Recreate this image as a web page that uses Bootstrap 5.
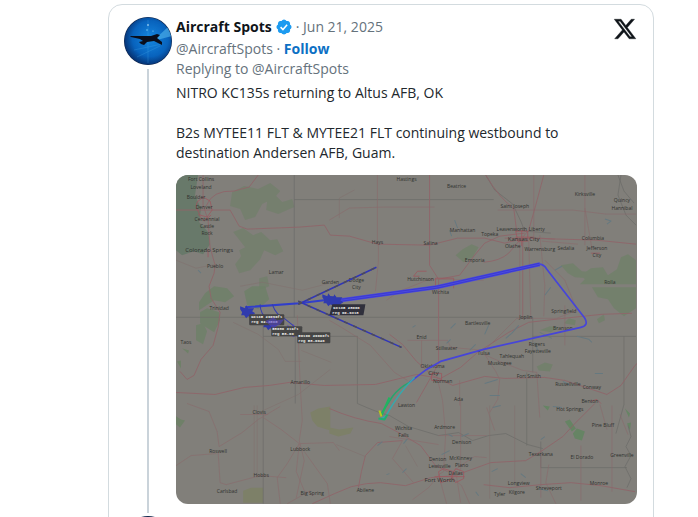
<!DOCTYPE html>
<html lang="en">
<head>
<meta charset="utf-8">
<meta name="viewport" content="width=device-width, initial-scale=1">
<title>Aircraft Spots on X</title>
<link href="https://cdn.jsdelivr.net/npm/bootstrap@5.3.0/dist/css/bootstrap.min.css" rel="stylesheet">
<style>
body{font-family:"Open Sans","Noto Sans",sans-serif;font-size:14px;line-height:20px;color:#22282d;background:#fff}
.page-wrap{padding:4px 44px 0 108px}
.post-card{border:1px solid #d3dbdf;border-radius:14px;padding:12px 16px 16px 15px}
.post-side{width:48px}
.avatar{width:48px;height:48px}
.thread{width:2px;background:#cad3da;margin:4px 0 3px}
.post-body{padding:0 0 12px 4px}
.name-row{margin-bottom:2px}
.muted{color:#65727c}
.author{color:#0f1419;font-weight:700}
.follow{color:#0c70c4;font-weight:700}
.post-text{margin:4px 0 12px;white-space:pre-line}
.map{border-radius:12px;background:#817f7a}
.x-logo{width:24px;height:24px}
</style>
<script src="https://cdn.jsdelivr.net/npm/bootstrap@5.3.0/dist/js/bootstrap.bundle.min.js"></script>
</head>
<body>
<main class="page-wrap vh-100 overflow-hidden">
<div class="post-card">
<article class="d-flex">
<div class="post-side d-flex flex-column align-items-center flex-shrink-0">
<svg class="avatar flex-shrink-0" viewBox="0 0 48 48" role="img" aria-label="Aircraft Spots avatar">
<defs><radialGradient id="sky" cx=".55" cy=".45" r=".62"><stop offset="0" stop-color="#1688e0"/><stop offset=".6" stop-color="#0863bd"/><stop offset="1" stop-color="#062158"/></radialGradient>
<clipPath id="disc"><circle cx="24" cy="24" r="23.5"/></clipPath></defs>
<circle cx="24" cy="24" r="24" fill="#10264c"/><g clip-path="url(#disc)"><rect width="48" height="48" fill="url(#sky)"/><path d="M29 24 45 9 48 19Z" fill="#4fb0e9" opacity=".65"/>
<path d="M10 33 38 27M13 40 36 29M24 3V46" stroke="#4aaceb" stroke-width=".5" opacity=".5"/><circle cx="24" cy="8" r=".8" fill="#d7f4ff"/><circle cx="23" cy="13" r=".7" fill="#8bdcff"/><circle cx="29" cy="14" r=".6" fill="#8bdcff"/></g>
<path id="jet" d="M6 19 27 19 33 17 36 18 33 21 38 25 38 28 30 24 23 25 20 28 17 27 15 25 19 24 16 22 7 20Z" fill="#090e1c"/></svg>
<div class="thread flex-grow-1"></div>
</div>
<div class="post-body flex-grow-1">
<header class="d-flex justify-content-between">
<div>
<div class="name-row d-flex align-items-center gap-1">
<span class="author">Aircraft Spots</span>
<svg width="16" height="16" viewBox="1 1 20 20" role="img" aria-label="Verified"><path fill="#1d9bf0" d="M20.396 11c-.018-.646-.215-1.275-.57-1.816-.354-.540-.852-.972-1.438-1.246.223-.607.270-1.264.140-1.897-.131-.634-.437-1.218-.882-1.687-.470-.445-1.053-.750-1.687-.882-.633-.130-1.290-.083-1.897.140-.273-.587-.704-1.086-1.245-1.440S11.647 1.620 11 1.604c-.646.017-1.273.213-1.813.568s-.969.854-1.240 1.440c-.608-.223-1.267-.272-1.902-.140-.635.130-1.220.436-1.690.882-.445.470-.749 1.055-.878 1.688-.130.633-.080 1.290.144 1.896-.587.274-1.087.705-1.443 1.245-.356.540-.555 1.170-.574 1.817.020.647.218 1.276.574 1.817.356.540.856.972 1.443 1.245-.224.606-.274 1.263-.144 1.896.130.634.433 1.218.877 1.688.470.443 1.054.747 1.687.878.633.132 1.290.084 1.897-.136.274.586.705 1.084 1.246 1.439.540.354 1.170.551 1.816.569.647-.016 1.276-.213 1.817-.567s.972-.854 1.245-1.440c.604.239 1.266.296 1.903.164.636-.132 1.220-.447 1.680-.907.460-.460.776-1.044.908-1.681s.075-1.299-.165-1.903c.586-.274 1.084-.705 1.439-1.246.354-.540.551-1.170.569-1.816z"/><path fill="none" stroke="#fff" stroke-width="1.900" d="m6.700 11.200 3 3 5.200-6"/></svg>
<span class="muted">· Jun 21, 2025</span>
</div>
<div class="muted">@AircraftSpots · <a class="follow text-decoration-none" href="#">Follow</a></div>
<div class="muted">Replying to @AircraftSpots</div>
</div>
<a href="#" aria-label="View on X"><svg class="x-logo d-block" viewBox="0 0 24 24"><path fill="#0f1419" stroke="#0f1419" stroke-width=".4" d="M18.244 2.250h3.308l-7.227 8.260 8.502 11.240H16.170l-5.214-6.817L4.990 21.750H1.680l7.730-8.835L1.254 2.250H8.080l4.713 6.231zm-1.161 17.520h1.833L7.084 4.126H5.117z"/></svg></a>
</header>
<p class="post-text pe-5">NITRO KC135s returning to Altus AFB, OK

B2s MYTEE11 FLT &amp; MYTEE21 FLT continuing westbound to destination Andersen AFB, Guam.</p>
<svg class="map d-block w-100" viewBox="177 175 460 328" role="img" aria-label="Flight tracks across the central United States" fill="none" stroke-linejoin="round">
<g fill="#6f8068">
<path d="M177 175h22l-3 20 6 14-2 13 9 10 2 12-7 10-9-3-12 4-6-5z" fill="#68796a"/>
<path d="M233 192l12-6 14 3 12-6 10 8-6 7-12 6-7 13-10 3-5-11-10-3zM268 201l8-6 7 7 10-3 2 8-16 7-12-4zM234 232l10-4 10 7 8-3 9 8 7-1 6 12-8 4-11-5-4 9-10 11-11 3-4-9 6-8-2-6 6-3zM260 278l8-2 2 10-10 4z" opacity=".65"/>
<path d="M206 293l9-7 13 2 7 8-9 6-11-2-9 6-6 4v-8zM201 312l7-4 12 4 1 8-6 12-8-5-6-4zM197 325l7-2 4 8-4 13-7-4zM245 291l8-5h13l4 13-11 10-11-4z" opacity=".85"/>
<path d="M456 255l7-6 9-5 7 3-6 10-9 5zM561 265l12-2 9 8 12 1-5 6-14-1-7-4zM581 275l10-7 12-1 5 8 9-6 4-12 7-3 8 6v24h-56l5-5zM592 287h44v21l-12 8-10-8-6-9-10-2zM597 319l7-5 1 6-6 3zM564 323l5-5 7 2-1 5zM540 330l10-4 9 1-8 5zM537 366l8-4 8 2-3 7-11-1z" opacity=".75"/>
<path d="M565 421l5-2 6 9-4 3zM573 433l4-5 8 3-3 9-7-2zM543 405l7 1-2 4zM625 408l5 5-1 4zM627 423l4-1-1 8z" fill="#668464"/>
<path d="M311 412l8-4 12-2v24l-13-4-5-6zM244 490l8-3h12v15h-20zM330 427l10 2 14-2-3 6-12 3-9-3z" fill="#7d8068"/>
<path d="M176 415l6 4 4 1-5 7-5-4zM183 348l7 2-1 3zM178 361l4-1v8z"/>
</g>
<g stroke="#6b6c69" stroke-width=".7">
<path d="M295 175V317M295 199.500H494M177 317H533M264 317V503M264 336H296V403M330 336H358V403M533 317V372M533 336H636M527 372V445M541 441V467H627M624 336v68l-8 29"/>
<path d="M486 175l9 15 18 14 8 17 4 10 26 2M618 175l6 16 10 12M621 175l-3 20 8 20 10 10"/>
<path d="M358 403q20 9 32 12l19 11 30 9 20-3 14 8 16-5 17-2 22 11 15 4M628 425l3 11-5 10 5 9-6 11 6 12-4 9"/>
</g>
<g stroke="#8f656a" stroke-width=".9">
<path d="M204 175v30l5 15 2 27 5 18-1 8-5 13 2 12 9 14-2 15-5 18-12 14-7 16-7 4-7-8M207 206q6-16 28-15l15-4 9-12M177 210h54l9 16 8 3 52-2 25-2 6 10 19 1 28 8 52 1 28-7h27l20 5 20-5 71 2 40 4"/>
<path d="M430 175v90l9 14v84l-6 11-16 28M439 279l21-4 15-20 10-12 15-7 25-3M544 175l-8 30-7 25-6 7v80M486 175q15 25 28 33l3 24M505 238h35l15 1M484 262q16-1 25-9l12-14"/>
<path d="M177 392l39 2 29-7 25-2 20-3 35 3 51-1 41-10 24 4 20-11 17-15 31-20 20-10 35-4 38-4 30-1M390 334l13 10 14 17 16 14 20 10 32-9 20 2 40-1 20 3 30 10 12 4 14-9 14-20 14-13"/>
<path d="M330 408q25 11 52 15l19 10 20 12 15 20 12 6M403 440l-25 2-12 13-4 16-3 16M313 503l22-10 17-7 15-3 14-1 25 3 25-8 24-2 36-13 35-2 15-9 22-15 12-13 20-20M484 484l26 3 31-3 30-2 30 3 34 6"/>
</g>
<g stroke="#8a696b" stroke-width=".6">
<path d="M540 235l5 50-1 31M520 240v77M529 240l2 77M585 175v70M301 385l-3-70M301 385l2 35-3 20 5 20-8 37M485 354l11 17 4 8-2 20-8 13M484 354q20 9 39 16l14 2 3 45"/>
<path d="M443 400l3 34-2 37-5 3 8 29M443 400l-6-25M461 400v68l-4 8 4 26M449 474l18-13 8-5 12 1M450 475l12 10 8 18M439 475l-10 12-16 12M439 435h48M439 444l-49-8M403 440l-10 18 21 24"/>
<path d="M188 403l22 8 8 20 2 15 23-14 16-13 22-13M264 417l18 12 18 14-12 20-10 14 3 26M300 443l-3 28 8 19 10 5M219 451l2 31 6 2 34-9 26 2M177 465l15-10 25-2M301 443l33-1 6 8M241 414h28M305 451l23 32 3 20M311 490l-23 13"/>
<path d="M484 280l-54-1-30 12-13 9M379 244v17l-3 30M378 175v70M330 220l20-12 35-1h50M330 320l12 7 29 18 24 27 13 8M408 340h40l3 7 34 3M422 340v25M460 380v25M545 260l20 20 12 30-20 8h-40l-30 30M565 305v40M542 241l36 3M534 175v62M585 208l7 40M498 210h75l33 4h30"/>
<path d="M541 449v48M549 464l-3 18 10 21M581 445v55M600 404l7 25M487 407l8 23M612 405v86M620 414l8 20"/>
</g>
<g stroke="#806f6d" stroke-width=".5"><path d="M234 322l25 12 20 15 7 12h16M302 350l30 12M241 286l22-4 40 8 27-7M355 190l-15 8v20M177 260l20 8 20-4M255 405v72M258 405v72M264 410l35-16 32-25M366 456l-29-12M406 445l12 21M490 405v93M515 405v80"/></g>
<g stroke="#667980" stroke-width="1"><path d="M450 230l2 6M455 220l3 8M489 325l-4 9M519 325l-7 8-6 5M545 295l6-8M577 336l12 3 3 3M540 332l12 6M605 219l6 2-4 3M555 270l7-4M413 327l3-2M451 328l5-5M447 343l4-4M470 350l6-6M535 342l3 8M563 381l6 3M485 383l13-4M490 395h10M492 471l6-3M553 406l9 1M383 441l-5 4M408 438l-4 5M387 474l3-1M407 468l-4 4M442 454l8-4M449 434l4 2M462 436l7-3M476 491l3 4M493 407l8-2M541 439l4-3M521 473l5 4M540 488l8 2M603 373h-8M199 270l3 3"/></g>
<g stroke="#9c585f" stroke-width=".8"><path d="M198 202l6-5 7 4 2 9-5 7-7-2-4-8zM199 214l6 7 7-6M516 231h12v10h-10zM522 230v16M516 237h18M432 373h10v7h-10zM439 471l5-3 10 3-3 8-10 3zM452 475l4-7 8 3v7l-8 4zM435 476h30M436 287v-9h18v10M420 276h-6l4-5h9M209 249v8M590 401l7-2 4 4M591 253h9"/></g>
<g fill="#30322f" stroke="none" font-family="Open Sans, sans-serif" font-size="5" text-anchor="middle">
<text x="202" y="181">Fort Collins</text><text x="202" y="189">Loveland</text><text x="197" y="199">Boulder</text><text x="205" y="209">Denver</text><text x="208" y="221">Centennial</text><text x="208" y="228">Castle</text><text x="208" y="235">Rock</text><text x="210" y="252" font-size="6">Colorado Springs</text><text x="216" y="268">Pueblo</text><text x="277" y="274">Lamar</text><text x="220" y="310">Trinidad</text><text x="187" y="344">Taos</text><text x="301" y="384">Amarillo</text>
<text x="407" y="181">Hastings</text><text x="457" y="188">Beatrice</text><text x="378" y="244">Hays</text><text x="431" y="245">Salina</text><text x="463" y="232">Manhattan</text><text x="475" y="262">Emporia</text><text x="421" y="281">Hutchinson</text><text x="357" y="282">Dodge</text><text x="357" y="289">City</text><text x="331" y="284">Garden</text>
<text x="515" y="208">Saint Joseph</text><text x="512" y="231">Leavenworth</text><text x="537" y="231">Liberty</text><text x="524" y="241" font-size="6">Kansas City</text><text x="490" y="236">Topeka</text><text x="513" y="248">Olathe</text><text x="540" y="251">Warrensburg</text><text x="566" y="250">Sedalia</text><text x="585" y="196">Kirksville</text><text x="622" y="202">Quincy</text><text x="622" y="210">Hannibal</text><text x="593" y="240">Columbia</text><text x="597" y="250">Jefferson</text><text x="597" y="257">City</text><text x="610" y="284">Rolla</text>
<text x="441" y="294">Wichita</text><text x="422" y="339">Enid</text><text x="447" y="350">Stillwater</text><text x="478" y="325">Bartlesville</text><text x="484" y="355">Tulsa</text><text x="433" y="368">Oklahoma</text><text x="434" y="375" font-size="6">City</text><text x="443" y="383">Norman</text><text x="459" y="401">Ada</text><text x="526" y="319">Joplin</text><text x="564" y="313">Springfield</text><text x="563" y="330">Branson</text><text x="537" y="346">Rogers</text><text x="538" y="353">Fayetteville</text><text x="512" y="358">Tahlequah</text><text x="500" y="365">Muskogee</text><text x="529" y="378">Fort Smith</text><text x="568" y="386">Russellville</text><text x="592" y="389">Conway</text>
<text x="260" y="414">Clovis</text><text x="219" y="452">Roswell</text><text x="262" y="476">Hobbs</text><text x="228" y="492">Carlsbad</text><text x="301" y="450">Lubbock</text><text x="313" y="494">Big Spring</text><text x="404" y="429">Wichita</text><text x="404" y="436">Falls</text><text x="407" y="407">Lawton</text><text x="445" y="428">Ardmore</text><text x="462" y="443">Denison</text><text x="366" y="491">Abilene</text><text x="438" y="460">Denton</text><text x="461" y="459">McKinney</text><text x="462" y="466">Plano</text><text x="440" y="467">Lewisville</text><text x="456" y="474">Dallas</text><text x="440" y="481" font-size="6">Fort Worth</text>
<text x="541" y="455">Texarkana</text><text x="570" y="411">Hot Springs</text><text x="590" y="403">Benton</text><text x="603" y="426">Pine Bluff</text><text x="582" y="458">El Dorado</text><text x="599" y="484">Monroe</text><text x="549" y="489">Shreveport</text><text x="519" y="484">Longview</text><text x="500" y="495">Tyler</text><text x="517" y="493">Kilgore</text><text x="622" y="456">Greenville</text></g>
<g>
<path d="M246 307l54-4 33-4" stroke="#313ecb" stroke-width="2"/><path d="M299 304 377 267M299 301l103 46" stroke="#3035b8" stroke-width="1.500"/><path d="M299 304 377 267M299 301l103 46" stroke="#4d4c58" stroke-width="1.500" stroke-dasharray="4 6"/>
<path d="m334 301 103-14 103-23" stroke="#4a49e2" stroke-width="4"/><path d="m334 300 103-14 103-23M334 302l103-14 103-23" stroke="#3434c7" stroke-width=".7"/><path d="M539 264q5 0 8 5l38 49q4 7-4 9l-97 22-43 12-14 8-17 13" stroke="#4645d9" stroke-width="1.700"/>
<path d="M410 382q-10 5-17 14l-11 17" stroke="#27a56e" stroke-width="1.500"/><path d="M390 397l-8 18" stroke="#20b560" stroke-width="2"/><path d="M415 377q-15 14-29 39l-6 3" stroke="#36a9ad" stroke-width="1.500"/><path d="M379 418l6 1 3-5" stroke="#22ad70" stroke-width="2"/><path d="M380 410l2 6" stroke="#b8c91d" stroke-width="2"/>
<path d="M261 304q0 11 8 14M273 304q4 11 12 14l10 8" stroke="#363db0" stroke-width="1"/>
</g>
<g fill="#303bad"><path id="marker" d="M241 306l5 2 1-3 2 3 6 0-2 3 3 2-3 2 0 3-4-2-2 2-2-3-3 0 1-3-2-3z"/><use href="#marker" x="22" y="12"/><use href="#marker" x="47" y="19" fill="#5142c7"/><use href="#marker" x="82" y="-12"/><use href="#marker" x="88" y="-11"/></g>
<g fill="#454545"><rect x="250" y="314" width="35" height="11" rx="1"/><rect x="272" y="326" width="31" height="10" rx="1"/><rect x="298" y="332" width="33" height="11" rx="1"/><path d="M333 304h33l-2 11h-34z" fill="#30303c"/></g>
<g fill="#f0f0ec" font-family="Liberation Mono, monospace" font-size="4" font-weight="700"><text x="252" y="318">KC135 29000ft</text><text x="252" y="323">reg 62-3505</text><text x="273" y="330">58086 31Kft</text><text x="273" y="335">reg 58-00</text><text x="299" y="337">50100 29000ft</text><text x="299" y="342">reg 58-0046</text><text x="334" y="309">KC135 28000</text><text x="333" y="314">reg 60-0318</text></g>
<path d="M266 321l8-4 4 3 7-1-4 5-7 4z" fill="#5142c7" opacity=".6"/>
</svg>
</div>
</article>
<article class="d-flex">
<div class="post-side flex-shrink-0"><svg class="avatar d-block" viewBox="0 0 48 48" role="img" aria-label="Aircraft Spots avatar"><circle cx="24" cy="24" r="24" fill="#10264c"/><circle cx="24" cy="24" r="23" fill="url(#sky)"/><use href="#jet"/></svg></div>
</article>
</div>
</main>
</body>
</html>
